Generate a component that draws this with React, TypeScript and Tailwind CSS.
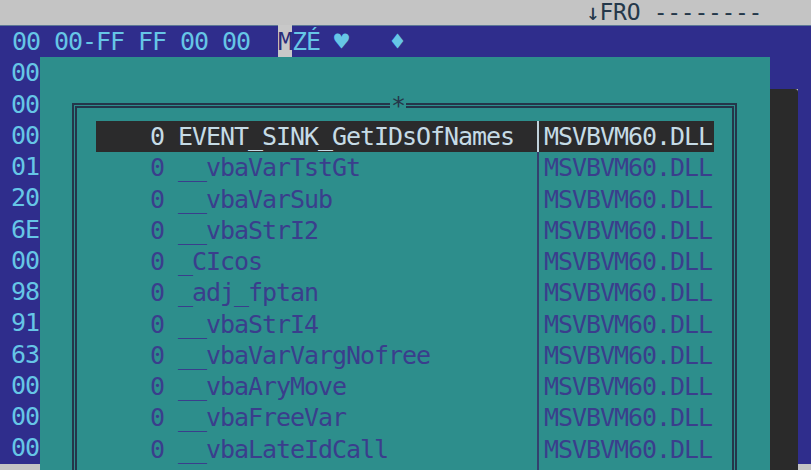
import React from "react";

const hexCol = ["00", "00", "00", "01", "20", "6E", "00", "98", "91", "63", "00", "00", "00"];
const names = [
  "EVENT_SINK_GetIDsOfNames",
  "__vbaVarTstGt",
  "__vbaVarSub",
  "__vbaStrI2",
  "_CIcos",
  "_adj_fptan",
  "__vbaStrI4",
  "__vbaVarVargNofree",
  "__vbaAryMove",
  "__vbaFreeVar",
  "__vbaLateIdCall",
];

export default function App() {
  return (
    <div className="w-[811px] h-[470px] overflow-hidden bg-[#c4c4c4] font-['DejaVu_Sans_Mono','Liberation_Mono',monospace] text-[25px] tracking-[-1.05px] leading-none">
      {/* top status bar */}
      <div className="h-[26px] bg-[#c4c4c4] flex items-center pl-[12px] text-[#24384a] whitespace-pre border-b border-[#5c7896]">
        <span className="w-[574px]"></span>
        <span className="text-[23px] tracking-[-0.3px] leading-[25px]">↓FRO --------</span>
      </div>

      {/* row 0 */}
      <div className="h-[31.25px] bg-[#2f2d8c] flex items-center pl-[12px] text-[#66c6e6] whitespace-pre">
        <span>00 00-FF FF 00 00  </span>
        <span className="relative -top-[0.5px] h-[32.25px] w-[14px] bg-[#c8c8c8] text-[#2b2d7a] flex items-center justify-center">M</span>
        <span>ZÉ ♥   ♦</span>
      </div>

      {/* main area */}
      <div className="flex h-[412.75px]">
        {/* left hex column */}
        <div className="w-[40px] flex flex-col">
          {hexCol.map((h, i) => (
            <div key={i} className="h-[31.25px] bg-[#2f2d8c] text-[#66c6e6] flex items-center pl-[11px]">
              {h}
            </div>
          ))}
        </div>

        {/* teal window */}
        <div className="relative w-[730px] h-full bg-[#2d8e8c] overflow-hidden pt-[46px] pl-[32px]">
          <span className="absolute left-[350px] top-[34px] w-[16px] h-[20px] bg-[#2d8e8c] text-[#25364a] flex items-center justify-center pt-[8px]">
            *
          </span>
          <div className="w-[665px] h-[420px] border-[5px] border-double border-[#24364a] pt-[12.75px] pl-[19px]">
            {names.map((n, i) => {
              const hi = i === 0;
              return (
                <div
                  key={i}
                  className={
                    hi
                      ? "h-[31.25px] w-[618px] flex items-stretch bg-[#2b2b2c] text-[#c6dbe6]"
                      : "h-[31.25px] w-[618px] flex items-stretch text-[#3a3e8c]"
                  }
                >
                  <span className="w-[68px] flex items-center justify-end">0</span>
                  <span className="w-[14px]"></span>
                  <span className="w-[359px] flex items-center whitespace-pre">{n}</span>
                  <span className={hi ? "w-[2px] bg-[#c0d2dc]" : "w-[2px] bg-[#34406e]"}></span>
                  <span className="flex-1 flex items-center pl-[5px]">MSVBVM60.DLL</span>
                </div>
              );
            })}
            <div className="h-[31.25px] w-[618px] flex items-stretch">
              <span className="w-[441px]"></span>
              <span className="w-[2px] bg-[#34406e]"></span>
            </div>
          </div>
        </div>

        {/* right strip */}
        <div className="w-[28px] flex flex-col">
          <div className="h-[31.25px] bg-[#2f2d8c]"></div>
          <div className="flex-1 bg-[#2a2a2a] rounded-tr-[3px]"></div>
        </div>
        <div className="w-[13px] flex flex-col">
          <div className="h-[406.25px] bg-[#2f2d8c]"></div>
        </div>
      </div>
    </div>
  );
}
